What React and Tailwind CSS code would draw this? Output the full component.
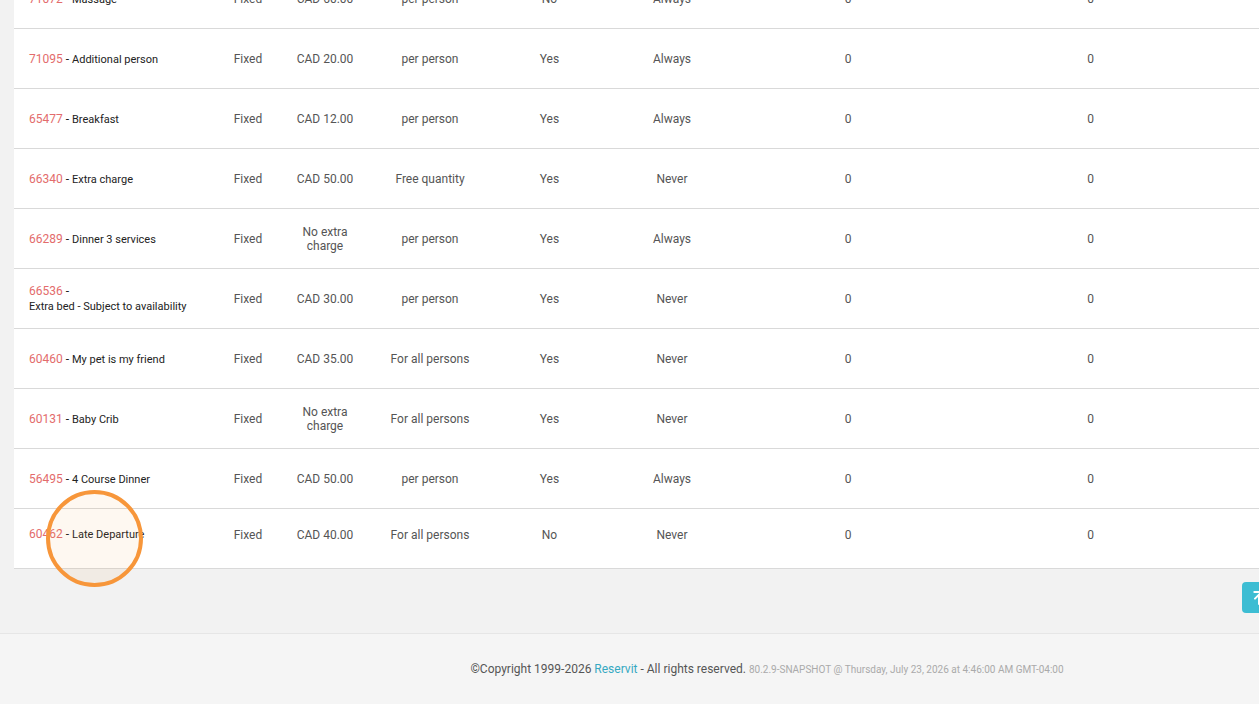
import React from "react";
import { ArrowUpToLine } from "lucide-react";

const rows = [
  { id: "71072", name: "Massage", type: "Fixed", price: "CAD 60.00", per: "per person", a: "No", b: "Always" },
  { id: "71095", name: "Additional person", type: "Fixed", price: "CAD 20.00", per: "per person", a: "Yes", b: "Always" },
  { id: "65477", name: "Breakfast", type: "Fixed", price: "CAD 12.00", per: "per person", a: "Yes", b: "Always" },
  { id: "66340", name: "Extra charge", type: "Fixed", price: "CAD 50.00", per: "Free quantity", a: "Yes", b: "Never" },
  { id: "66289", name: "Dinner 3 services", type: "Fixed", price: "No extra charge", per: "per person", a: "Yes", b: "Always" },
  { id: "66536", name: "Extra bed - Subject to availability", type: "Fixed", price: "CAD 30.00", per: "per person", a: "Yes", b: "Never" },
  { id: "60460", name: "My pet is my friend", type: "Fixed", price: "CAD 35.00", per: "For all persons", a: "Yes", b: "Never" },
  { id: "60131", name: "Baby Crib", type: "Fixed", price: "No extra charge", per: "For all persons", a: "Yes", b: "Never" },
  { id: "56495", name: "4 Course Dinner", type: "Fixed", price: "CAD 50.00", per: "per person", a: "Yes", b: "Always" },
  { id: "60462", name: "Late Departure", type: "Fixed", price: "CAD 40.00", per: "For all persons", a: "No", b: "Never" },
];

const Row = ({ row, last }) => (
  <div
    className={
      "grid h-[60px] grid-cols-[201px_66px_88px_122px_116px_130px_222px_263px_1fr] items-center border-b border-[#d9d9d9] text-[12px] text-[#555] " +
      (last ? "pb-[8px]" : "pt-[1px]")
    }
  >
    <div className="pl-[15px] pr-[15px] leading-[15px]">
      <span className="text-[#e36c6c]">{row.id}</span>
      <span className="text-[#222]"> - </span>
      <span className="inline-block text-[11px] text-[#222]">{row.name}</span>
    </div>
    <div className="text-center">{row.type}</div>
    <div className="px-[10px] text-center leading-[14px]">{row.price}</div>
    <div className="text-center">{row.per}</div>
    <div className="pl-[1px] text-center">{row.a}</div>
    <div className="text-center">{row.b}</div>
    <div className="text-center">0</div>
    <div className="text-center">0</div>
    <div />
  </div>
);

const App = () => {
  return (
    <div
      className="relative h-[704px] w-full overflow-hidden bg-[#f2f2f2]"
      style={{ fontFamily: "Roboto, 'Liberation Sans', sans-serif" }}
    >
      <div className="pl-[14px]">
        <div className="-mt-[31px] bg-white">
          {rows.map((row, i) => (
            <Row key={row.id} row={row} last={i === rows.length - 1} />
          ))}
        </div>
      </div>

      <div className="flex h-[64px] justify-end pt-[13px]">
        <button className="-mr-[23px] flex h-[31px] w-[40px] items-center justify-start rounded-[4px] bg-[#3dbdd3] pl-[9px] text-white">
          <ArrowUpToLine size={16} strokeWidth={3} />
        </button>
      </div>

      <footer className="flex h-[71px] items-center justify-center border-t border-[#e6e6e6] bg-[#f5f5f5] pl-[275px]">
        <p className="text-[12px] text-[#555]">
          ©Copyright 1999-2026 <span className="text-[#36a9c2]">Reservit</span> - All rights reserved.{" "}
          <span className="text-[10px] text-[#aaa]">
            80.2.9-SNAPSHOT @ Thursday, July 23, 2026 at 4:46:00 AM GMT-04:00
          </span>
        </p>
      </footer>

      <div className="pointer-events-none absolute left-[46px] top-[490px] h-[97px] w-[97px] rounded-full border-[4px] border-[#f7963a] bg-[#f7963a]/[0.07]" />
    </div>
  );
};

export default App;
